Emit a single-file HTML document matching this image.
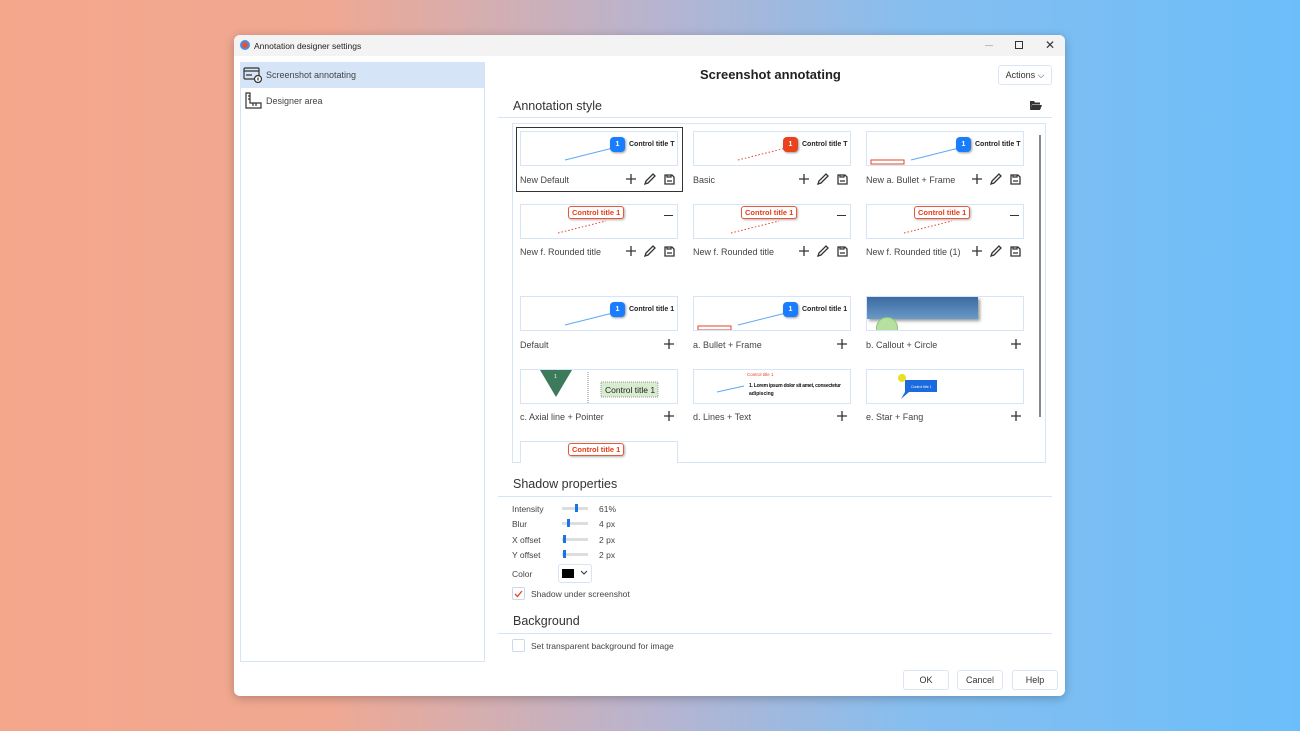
<!DOCTYPE html>
<html><head><meta charset="utf-8"><style>
*{margin:0;padding:0;box-sizing:border-box}
body{width:1300px;height:731px;overflow:hidden;background:linear-gradient(90deg,#f5a78b 0%,#f0a892 25%,#b8b4cf 50%,#86beef 70%,#6cbefa 100%);font-family:"Liberation Sans",sans-serif;color:#333;position:relative}
.a{position:absolute}
.dlg{left:234px;top:35px;width:831px;height:661px;background:#fff;border-radius:6px;overflow:hidden;box-shadow:0 2px 10px rgba(0,0,0,.25)}
.t{font-size:9px;color:#444;white-space:nowrap}
.pv{border:1px solid #d6e4f7;background:#fff;width:158px;height:35px;overflow:hidden}
.btn{border:1px solid #dbe6f5;border-radius:3px;background:#fff;font-size:9px;text-align:center;line-height:18px;color:#333}
.sl{width:26px;height:3px;background:#ddd}
.kn{width:3px;height:8px;background:#1a73e8;top:-3px}
.cb{width:13px;height:13px;border:1px solid #c9d9ef;border-radius:2px;background:#fff}
.h{font-size:12.5px;color:#333}
.hl{height:1px;background:#d6e4f7}
.bul{width:15px;height:15px;border-radius:4px;background:#1a7dff;color:#fff;font-size:7px;font-weight:bold;text-align:center;line-height:15px;box-shadow:1px 1px 2px rgba(0,0,0,.4)}
.ct{font-size:7px;font-weight:bold;color:#222}
.rt{border:1px solid #e45a3a;border-radius:3px;color:#e43c1a;font-size:7.5px;font-weight:bold;padding:1px 3px;background:#fff;box-shadow:1px 1px 2px rgba(0,0,0,.3)}
</style></head><body>
<div class="a dlg">
 <div class="a" style="left:0;top:0;width:831px;height:21px;background:#f3f3f3"></div>
 <div class="a" style="left:6px;top:5px;width:10px;height:10px;border-radius:50%;background:#e2533c;border:2px solid #4a8fe0"></div>
 <div class="a t" style="left:20px;top:6px;font-size:8.5px;color:#222">Annotation designer settings</div>
 <div class="a" style="left:751px;top:10px;width:8px;height:1px;background:#bbb"></div>
 <div class="a" style="left:781px;top:6px;width:8px;height:8px;border:1px solid #333"></div>
 <div class="a t" style="left:811px;top:3px;font-size:12px;color:#333">✕</div>

 <div class="a" style="left:6px;top:27px;width:245px;height:600px;border:1px solid #d6e4f7"></div>
 <div class="a" style="left:7px;top:28px;width:243px;height:25px;background:#d6e4f7"></div>
 <svg class="a" style="left:9px;top:32px" width="20" height="16" viewBox="0 0 20 16" fill="none" stroke="#333" stroke-width="1.2"><rect x="1" y="1" width="15" height="11" rx="1"/><path d="M1 4h15M3 8h6"/><circle cx="15" cy="12" r="3.5" fill="#fff"/><path d="M15 10.5v3"/></svg>
 <div class="a t" style="left:32px;top:35px">Screenshot annotating</div>
 <svg class="a" style="left:10px;top:57px" width="18" height="17" viewBox="0 0 18 17" fill="none" stroke="#333" stroke-width="1.2"><path d="M2 1v15h15v-5H6V1z M6 4h-2M6 7h-2M9 11v3M12 11v3"/></svg>
 <div class="a t" style="left:32px;top:61px">Designer area</div>

 <div class="a" style="left:466px;top:32px;font-size:13px;font-weight:bold;color:#222">Screenshot annotating</div>
 <div class="a btn" style="left:764px;top:30px;width:54px;height:20px">Actions ⌵</div>
 <div class="a h" style="left:279px;top:64px">Annotation style</div>
 <svg class="a" style="left:795px;top:65px" width="13" height="11" viewBox="0 0 13 11"><path d="M1 1h4l1 1.5h5v2H3L1 10z" fill="#333"/><path d="M3 5h10l-2 5H1z" fill="#333"/></svg>
 <div class="a hl" style="left:264px;top:82px;width:554px"></div>

 <div class="a" style="left:278px;top:88px;width:534px;height:340px;border:1px solid #d6e4f7"></div>
 <div class="a" style="left:805px;top:100px;width:2px;height:282px;background:#888"></div>
 <div class="a" style="left:282px;top:92px;width:167px;height:65px;border:1px solid #333"></div>

 <!-- row1 -->
 <div class="a pv" style="left:286px;top:96px"><svg class="a" width="158" height="35"><line x1="44" y1="28" x2="92" y2="16" stroke="#5aaaf0"/></svg><div class="a bul" style="left:89px;top:5px">1</div><div class="a ct" style="left:108px;top:9px">Control title T</div></div>
 <div class="a pv" style="left:459px;top:96px"><svg class="a" width="158" height="35"><line x1="44" y1="28" x2="92" y2="16" stroke="#e5442a" stroke-dasharray="1.5 2"/></svg><div class="a bul" style="left:89px;top:5px;background:#e9421d">1</div><div class="a ct" style="left:108px;top:9px">Control title T</div></div>
 <div class="a pv" style="left:632px;top:96px"><svg class="a" width="158" height="35"><line x1="44" y1="28" x2="92" y2="16" stroke="#5aaaf0"/><rect x="4" y="28" width="33" height="4" fill="none" stroke="#e5442a"/></svg><div class="a bul" style="left:89px;top:5px">1</div><div class="a ct" style="left:108px;top:9px">Control title T</div></div>
 <div class="a t" style="left:286px;top:140px">New Default</div>
 <div class="a t" style="left:459px;top:140px">Basic</div>
 <div class="a t" style="left:632px;top:140px">New a. Bullet + Frame</div>

 <!-- row2 -->
 <div class="a pv" style="left:286px;top:169px"><svg class="a" width="158" height="35"><line x1="37" y1="28" x2="85" y2="16" stroke="#e5442a" stroke-dasharray="1.5 2"/></svg><div class="a rt" style="left:47px;top:1px">Control title 1</div><div class="a" style="left:143px;top:10px;width:9px;height:1px;background:#333"></div></div>
 <div class="a pv" style="left:459px;top:169px"><svg class="a" width="158" height="35"><line x1="37" y1="28" x2="85" y2="16" stroke="#e5442a" stroke-dasharray="1.5 2"/></svg><div class="a rt" style="left:47px;top:1px">Control title 1</div><div class="a" style="left:143px;top:10px;width:9px;height:1px;background:#333"></div></div>
 <div class="a pv" style="left:632px;top:169px"><svg class="a" width="158" height="35"><line x1="37" y1="28" x2="85" y2="16" stroke="#e5442a" stroke-dasharray="1.5 2"/></svg><div class="a rt" style="left:47px;top:1px">Control title 1</div><div class="a" style="left:143px;top:10px;width:9px;height:1px;background:#333"></div></div>
 <div class="a t" style="left:286px;top:212px">New f. Rounded title</div>
 <div class="a t" style="left:459px;top:212px">New f. Rounded title</div>
 <div class="a t" style="left:632px;top:212px">New f. Rounded title (1)</div>

 <!-- row3 -->
 <div class="a pv" style="left:286px;top:261px"><svg class="a" width="158" height="35"><line x1="44" y1="28" x2="92" y2="16" stroke="#5aaaf0"/></svg><div class="a bul" style="left:89px;top:5px">1</div><div class="a ct" style="left:108px;top:9px">Control title 1</div></div>
 <div class="a pv" style="left:459px;top:261px"><svg class="a" width="158" height="35"><line x1="44" y1="28" x2="92" y2="16" stroke="#5aaaf0"/><rect x="4" y="29" width="33" height="4" fill="none" stroke="#e5442a"/></svg><div class="a bul" style="left:89px;top:5px">1</div><div class="a ct" style="left:108px;top:9px">Control title 1</div></div>
 <div class="a pv" style="left:632px;top:261px"><div class="a" style="left:0;top:0;width:111px;height:22px;background:linear-gradient(#3a6aa0,#6a9ac8);box-shadow:2px 2px 3px rgba(0,0,0,.4)"></div><div class="a" style="left:9px;top:20px;width:22px;height:22px;border-radius:50%;background:#b5e0a0;border:1px solid #8fc27a"></div></div>
 <div class="a t" style="left:286px;top:305px">Default</div>
 <div class="a t" style="left:459px;top:305px">a. Bullet + Frame</div>
 <div class="a t" style="left:632px;top:305px">b. Callout + Circle</div>

 <!-- row4 -->
 <div class="a pv" style="left:286px;top:334px"><svg class="a" width="158" height="35"><path d="M19 0h32L35 27z" fill="#3b7a5a"/><text x="33" y="8" font-size="5" fill="#fff" font-family="Liberation Sans">1</text><path d="M67 2v33" stroke="#888" stroke-dasharray="1 1"/><rect x="80" y="12" width="57" height="15" fill="#d8ecd0" stroke="#999" stroke-dasharray="1 1"/><text x="84" y="23" font-size="8.5" font-family="Liberation Sans" fill="#222">Control title 1</text></svg></div>
 <div class="a pv" style="left:459px;top:334px"><svg class="a" width="158" height="35"><line x1="23" y1="22" x2="50" y2="16" stroke="#5aaaf0"/><text x="53" y="6" font-size="4.5" font-family="Liberation Sans" fill="#e5442a">Control title 1</text><text x="55" y="17" font-size="5" font-weight="bold" font-family="Liberation Sans" fill="#111" textLength="92">1. Lorem ipsum dolor sit amet, consectetur</text><text x="55" y="25" font-size="5" font-weight="bold" font-family="Liberation Sans" fill="#111">adipiscing</text></svg></div>
 <div class="a pv" style="left:632px;top:334px"><svg class="a" width="158" height="35"><path d="M38 10h32v12H42l-8 7 4-7z" fill="#1a6ae0"/><circle cx="35" cy="8" r="4" fill="#e8e020"/><text x="44" y="18" font-size="3.5" fill="#fff" font-family="Liberation Sans">Control title 1</text></svg></div>
 <div class="a t" style="left:286px;top:377px">c. Axial line + Pointer</div>
 <div class="a t" style="left:459px;top:377px">d. Lines + Text</div>
 <div class="a t" style="left:632px;top:377px">e. Star + Fang</div>

 <!-- row5 -->
 <div class="a pv" style="left:286px;top:406px;height:22px;border-bottom:none"><div class="a rt" style="left:47px;top:1px">Control title 1</div></div>

 <!-- icons -->
 <svg class="a" style="left:0;top:0" width="831" height="661" fill="none" stroke="#333" stroke-width="1.3">
  <path d="M397 139v10M392 144h10M570 139v10M565 144h10M743 139v10M738 144h10M397 211v10M392 216h10M570 211v10M565 216h10M743 211v10M738 216h10M435 304v10M430 309h10M608 304v10M603 309h10M782 304v10M777 309h10M435 376v10M430 381h10M608 376v10M603 381h10M782 376v10M777 381h10"/>
  <path d="M411 149l1-3 7-7 2 2-7 7zM584 149l1-3 7-7 2 2-7 7zM757 149l1-3 7-7 2 2-7 7zM411 221l1-3 7-7 2 2-7 7zM584 221l1-3 7-7 2 2-7 7zM757 221l1-3 7-7 2 2-7 7z"/>
  <path d="M431 140h7l2 2v7h-9zM433 140v2h4v-2M433 146h5"/>
  <path d="M604 140h7l2 2v7h-9zM606 140v2h4v-2M606 146h5"/>
  <path d="M777 140h7l2 2v7h-9zM779 140v2h4v-2M779 146h5"/>
  <path d="M431 212h7l2 2v7h-9zM433 212v2h4v-2M433 218h5"/>
  <path d="M604 212h7l2 2v7h-9zM606 212v2h4v-2M606 218h5"/>
  <path d="M777 212h7l2 2v7h-9zM779 212v2h4v-2M779 218h5"/>
 </svg>

 <!-- shadow -->
 <div class="a h" style="left:279px;top:442px">Shadow properties</div>
 <div class="a hl" style="left:264px;top:461px;width:554px"></div>
 <div class="a t" style="left:278px;top:469px;font-size:8.5px">Intensity</div>
 <div class="a t" style="left:278px;top:484px;font-size:8.5px">Blur</div>
 <div class="a t" style="left:278px;top:500px;font-size:8.5px">X offset</div>
 <div class="a t" style="left:278px;top:515px;font-size:8.5px">Y offset</div>
 <div class="a sl" style="left:328px;top:472px"><div class="a kn" style="left:13px"></div></div>
 <div class="a sl" style="left:328px;top:487px"><div class="a kn" style="left:5px"></div></div>
 <div class="a sl" style="left:328px;top:503px"><div class="a kn" style="left:1px"></div></div>
 <div class="a sl" style="left:328px;top:518px"><div class="a kn" style="left:1px"></div></div>
 <div class="a t" style="left:365px;top:469px;font-size:8.5px">61%</div>
 <div class="a t" style="left:365px;top:484px;font-size:8.5px">4 px</div>
 <div class="a t" style="left:365px;top:500px;font-size:8.5px">2 px</div>
 <div class="a t" style="left:365px;top:515px;font-size:8.5px">2 px</div>
 <div class="a t" style="left:278px;top:534px;font-size:8.5px">Color</div>
 <div class="a" style="left:324px;top:529px;width:34px;height:19px;border:1px solid #d6e4f7;border-radius:3px"></div>
 <div class="a" style="left:328px;top:534px;width:12px;height:9px;background:#000"></div>
 <svg class="a" style="left:346px;top:535px" width="8" height="6"><path d="M1 1l3 3 3-3" stroke="#333" fill="none"/></svg>
 <div class="a cb" style="left:278px;top:552px"></div>
 <svg class="a" style="left:280px;top:555px" width="9" height="8"><path d="M1 4l2.5 2.5L8 1" stroke="#e5442a" stroke-width="1.3" fill="none"/></svg>
 <div class="a t" style="left:297px;top:554px;font-size:8.5px">Shadow under screenshot</div>

 <div class="a h" style="left:279px;top:579px">Background</div>
 <div class="a hl" style="left:264px;top:598px;width:554px"></div>
 <div class="a cb" style="left:278px;top:604px"></div>
 <div class="a t" style="left:297px;top:606px;font-size:8.5px">Set transparent background for image</div>

 <div class="a btn" style="left:669px;top:635px;width:46px;height:20px">OK</div>
 <div class="a btn" style="left:723px;top:635px;width:46px;height:20px">Cancel</div>
 <div class="a btn" style="left:778px;top:635px;width:46px;height:20px">Help</div>
</div>
</body></html>
